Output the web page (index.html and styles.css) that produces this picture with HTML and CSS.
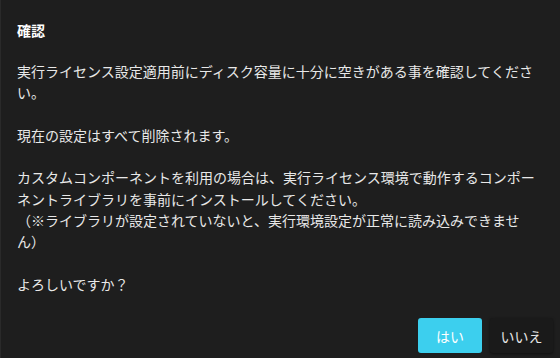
FILE: index.html
```html
<!DOCTYPE html>
<html lang="ja">
<head>
    <meta charset="UTF-8">
    <meta name="viewport" content="width=device-width, initial-scale=1.0">
    <title>確認</title>
    <link rel="stylesheet" href="styles.css">
</head>
<body>
    <div class="dialog">
        <h2 class="dialog-title">確認</h2>
        <div class="dialog-body">
            <p>実行ライセンス設定適用前にディスク容量に十分に空きがある事を確認してください。</p>
            <p>現在の設定はすべて削除されます。</p>
            <p>カスタムコンポーネントを利用の場合は、実行ライセンス環境で動作するコンポーネントライブラリを事前にインストールしてください。<br>（※ライブラリが設定されていないと、実行環境設定が正常に読み込みできません）</p>
            <p>よろしいですか？</p>
        </div>
        <div class="dialog-actions">
            <button class="btn btn-primary">はい</button>
            <button class="btn btn-secondary">いいえ</button>
        </div>
    </div>
</body>
</html>
```

FILE: styles.css
```css
html, body {
    margin: 0;
    padding: 0;
    background: #1e1e1e;
}
body {
    font-family: "Noto Sans CJK JP", "Noto Sans", sans-serif;
    color: #e8e8e8;
    font-size: 14px;
}
.dialog {
    height: 358px;
    box-sizing: border-box;
    border-left: 1px solid #2a2a2a;
    display: flex;
    flex-direction: column;
}
.dialog-title {
    margin: 0;
    padding: 20px 18px 0 16px;
    font-size: 14px;
    line-height: 21px;
    font-weight: bold;
    color: #fff;
}
.dialog-body {
    padding: 20px 18px 0 16px;
    line-height: 21.3px;
    text-spacing-trim: space-all;
}
.dialog-body p {
    margin: 0 0 21.3px;
}
.dialog-actions {
    margin-top: auto;
    display: flex;
    justify-content: flex-end;
    gap: 8px;
    padding: 0 7px 5px 0;
}
.btn {
    height: 35px;
    padding: 0;
    border: none;
    border-radius: 3px;
    font-family: inherit;
    font-size: 14px;
    cursor: pointer;
}
.btn-primary {
    width: 64px;
    background: #3ccfee;
    color: #fff;
}
.btn-secondary {
    width: 63px;
    background: #1a1a1a;
    color: #e6e6e6;
    box-shadow: 0 1px 3px rgba(0, 0, 0, 0.5);
}
```
